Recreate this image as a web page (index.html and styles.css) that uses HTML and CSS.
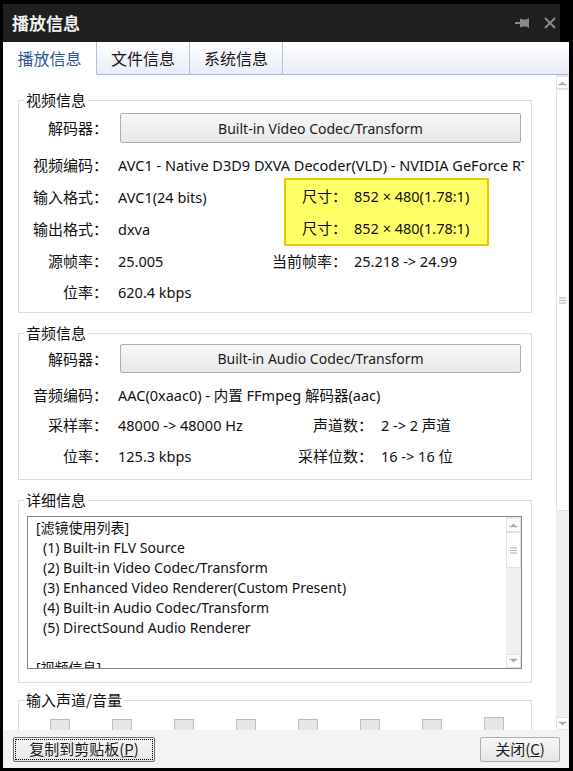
FILE: index.html
```html
<!DOCTYPE html>
<html lang="zh-CN">
<head>
<meta charset="utf-8">
<title>播放信息</title>
<link rel="stylesheet" href="styles.css">
</head>
<body>
<div class="window">
  <header class="titlebar">
    <span class="title">播放信息</span>
    <div class="title-icons">
      <svg class="pin" width="15" height="12" viewBox="0 0 15 12">
        <rect x="0" y="5" width="6" height="2" fill="#8a8a8a"/>
        <path d="M5 1.5 L7.5 2.5 L11.5 2.5 L14 1 L14 11 L11.5 9.5 L7.5 9.5 L5 10.5 Z" fill="#8a8a8a"/>
      </svg>
      <svg class="close" width="12" height="12" viewBox="0 0 12 12">
        <path d="M1 1 L11 11 M11 1 L1 11" stroke="#8a8a8a" stroke-width="2"/>
      </svg>
    </div>
  </header>

  <nav class="tabs">
    <div class="tab active">播放信息</div>
    <div class="tab">文件信息</div>
    <div class="tab">系统信息</div>
    <div class="tab-rest"></div>
  </nav>

  <main class="main">
    <div class="content">
      <fieldset class="group g-video">
        <legend>视频信息</legend>
        <div class="decoder-row">
          <span class="lbl">解码器：</span>
          <button class="codec">Built-in Video Codec/Transform</button>
        </div>
        <div class="vgrid">
          <span class="lbl">视频编码：</span>
          <span class="val span3">AVC1 - Native D3D9 DXVA Decoder(VLD) - NVIDIA GeForce RTX 2060</span>

          <span class="lbl">输入格式：</span>
          <span class="val">AVC1(24 bits)</span>
          <div class="highlight">
            <span class="hlbl">尺寸：</span><span class="val">852 × 480(1.78:1)</span>
            <span class="hlbl">尺寸：</span><span class="val">852 × 480(1.78:1)</span>
          </div>

          <span class="lbl">输出格式：</span>
          <span class="val">dxva</span>

          <span class="lbl">源帧率：</span>
          <span class="val">25.005</span>
          <span class="lbl2">当前帧率：</span>
          <span class="val">25.218 -&gt; 24.99</span>

          <span class="lbl">位率：</span>
          <span class="val">620.4 kbps</span>
        </div>
      </fieldset>

      <fieldset class="group g-audio">
        <legend>音频信息</legend>
        <div class="decoder-row">
          <span class="lbl">解码器：</span>
          <button class="codec">Built-in Audio Codec/Transform</button>
        </div>
        <div class="agrid">
          <span class="lbl">音频编码：</span>
          <span class="val span3">AAC(0xaac0) - 内置 FFmpeg 解码器(aac)</span>

          <span class="lbl">采样率：</span>
          <span class="val">48000 -&gt; 48000 Hz</span>
          <span class="lbl2">声道数：</span>
          <span class="val">2 -&gt; 2 声道</span>

          <span class="lbl">位率：</span>
          <span class="val">125.3 kbps</span>
          <span class="lbl2">采样位数：</span>
          <span class="val">16 -&gt; 16 位</span>
        </div>
      </fieldset>

      <fieldset class="group g-detail">
        <legend>详细信息</legend>
        <div class="listbox">
          <div class="list-lines">
            <div class="line">[滤镜使用列表]</div>
            <div class="line item">(1) Built-in FLV Source</div>
            <div class="line item">(2) Built-in Video Codec/Transform</div>
            <div class="line item">(3) Enhanced Video Renderer(Custom Present)</div>
            <div class="line item">(4) Built-in Audio Codec/Transform</div>
            <div class="line item">(5) DirectSound Audio Renderer</div>
            <div class="line">&nbsp;</div>
            <div class="line">[视频信息]</div>
          </div>
          <div class="mini-sb">
            <div class="msb-btn">
              <svg width="9" height="6" viewBox="0 0 9 6"><path d="M2 4 L4.5 1.5 L7 4 Z" fill="#a8a8a8"/><rect x="0.5" y="4" width="8" height="1.2" fill="#a8a8a8"/></svg>
            </div>
            <div class="msb-thumb">
              <svg width="9" height="7" viewBox="0 0 9 7"><rect x="1" y="0.5" width="7" height="1" fill="#b0b0b0"/><rect x="1" y="3" width="7" height="1" fill="#b0b0b0"/><rect x="1" y="5.5" width="7" height="1" fill="#b0b0b0"/></svg>
            </div>
            <div class="msb-track"></div>
            <div class="msb-btn">
              <svg width="9" height="6" viewBox="0 0 9 6"><rect x="0.5" y="0.8" width="8" height="1.2" fill="#a8a8a8"/><path d="M2 2 L4.5 4.5 L7 2 Z" fill="#a8a8a8"/></svg>
            </div>
          </div>
        </div>
      </fieldset>

      <fieldset class="group g-input">
        <legend>输入声道/音量</legend>
        <div class="meters">
          <span class="meter"></span>
          <span class="meter"></span>
          <span class="meter"></span>
          <span class="meter"></span>
          <span class="meter"></span>
          <span class="meter"></span>
          <span class="meter"></span>
          <span class="meter tall"></span>
        </div>
      </fieldset>
    </div>

    <div class="vscroll">
      <div class="sb-btn">
        <svg width="9" height="6" viewBox="0 0 9 6"><path d="M2 4 L4.5 1.5 L7 4 Z" fill="#a8a8a8"/><rect x="0.5" y="4" width="8" height="1.2" fill="#a8a8a8"/></svg>
      </div>
      <div class="sb-thumb">
        <svg width="9" height="7" viewBox="0 0 9 7"><rect x="1" y="0.5" width="7" height="1" fill="#b0b0b0"/><rect x="1" y="3" width="7" height="1" fill="#b0b0b0"/><rect x="1" y="5.5" width="7" height="1" fill="#b0b0b0"/></svg>
      </div>
      <div class="sb-track"></div>
      <div class="sb-btn">
        <svg width="9" height="6" viewBox="0 0 9 6"><rect x="0.5" y="0.8" width="8" height="1.2" fill="#a8a8a8"/><path d="M2 2 L4.5 4.5 L7 2 Z" fill="#a8a8a8"/></svg>
      </div>
    </div>
  </main>

  <footer class="footer">
    <button class="fbtn copy">复制到剪贴板(<u>P</u>)</button>
    <button class="fbtn close-btn">关闭(<u>C</u>)</button>
  </footer>
</div>
</body>
</html>
```

FILE: styles.css
```css
* { box-sizing: border-box; }

html, body {
  margin: 0;
  padding: 0;
}

body {
  background: #000;
  font-family: "Noto Sans", "Noto Sans CJK SC", sans-serif;
  font-size: 14px;
  line-height: 20px;
  color: #111;
}

.window {
  width: 573px;
  height: 771px;
  padding: 4px 4px 3px 3px;
  display: flex;
  flex-direction: column;
  background: #000;
  overflow: hidden;
}

/* title bar */
.titlebar {
  height: 38px;
  flex: none;
  margin-right: 9px;
  background: #1f1f1f;
  display: flex;
  align-items: center;
  justify-content: space-between;
  padding: 0 4px 0 9px;
}

.title {
  color: #f0f0f0;
  font-family: "Noto Sans CJK SC", sans-serif;
  font-size: 17px;
  font-weight: 700;
}

.title-icons {
  display: flex;
  align-items: center;
  gap: 14px;
}

.title-icons svg { display: block; }

/* tabs */
.tabs {
  height: 33px;
  flex: none;
  display: flex;
  background: linear-gradient(#ffffff, #e8ebf8);
}

.tab {
  width: 93px;
  display: flex;
  align-items: center;
  justify-content: center;
  font-family: "Noto Sans CJK SC", sans-serif;
  font-size: 16px;
  color: #1a1a1a;
  border-right: 1px solid #b7bedf;
  border-bottom: 1px solid #a9b1d8;
}

.tab.active {
  width: 94px;
  background: #fff;
  border-bottom-color: #fff;
  color: #2f5597;
}

.tab-rest {
  flex: 1;
  border-bottom: 1px solid #a9b1d8;
}

/* main */
.main {
  flex: 1;
  min-height: 0;
  display: flex;
}

.content {
  flex: 1;
  min-width: 0;
  overflow: hidden;
  background: #fff;
  padding: 15px 0 0 15px;
}

.vscroll {
  width: 13px;
  flex: none;
  display: flex;
  flex-direction: column;
  background: #f0f0f0;
  padding-top: 1px;
}

.sb-btn, .msb-btn {
  flex: none;
  display: flex;
  align-items: center;
  justify-content: center;
  background: #fff;
  border: 1px solid #e2e2e2;
}

.sb-btn { height: 13px; }

.sb-thumb, .msb-thumb {
  flex: none;
  display: flex;
  align-items: center;
  justify-content: center;
  background: #fff;
  border: 1px solid #e2e2e2;
}

.sb-thumb { height: 422px; }

.sb-track, .msb-track { flex: 1; }

.vscroll svg, .mini-sb svg { display: block; }

/* group boxes */
.group {
  margin: 0;
  padding: 0;
  width: 514px;
  min-width: 0;
  border: 1px solid #dcdcdc;
}

.group legend {
  margin-left: 5px;
  padding: 0 2px;
  font-family: "Noto Sans CJK SC", sans-serif;
  font-size: 15px;
  line-height: 20px;
  color: #111;
}

.lbl, .lbl2, .hlbl {
  font-family: "Noto Sans CJK SC", sans-serif;
  font-size: 15px;
  text-align: right;
  white-space: nowrap;
  color: #111;
}

.val {
  white-space: nowrap;
  font-size: 14.5px;
  color: #111;
}

.decoder-row {
  display: flex;
  align-items: center;
}

.decoder-row .lbl {
  width: 89px;
  flex: none;
}

.codec {
  margin: 0 0 0 12px;
  width: 401px;
  padding: 0;
  font-family: "Noto Sans", "Noto Sans CJK SC", sans-serif;
  font-size: 14px;
  color: #1c1c1c;
  background: linear-gradient(#f7f7f7, #e8e8e8);
  border: 1px solid #adadad;
  border-radius: 2px;
}

/* video */
.g-video .decoder-row { margin-top: 3px; height: 30px; }
.g-video .codec { height: 30px; }

.vgrid {
  margin-top: 6px;
  padding-bottom: 5px;
  display: grid;
  grid-template-columns: 99px 148px 88px 170px;
  grid-template-rows: 32px 32px 32px 32px 30px;
  align-items: center;
}

.vgrid .lbl { grid-column: 1; padding-right: 10px; }
.vgrid .lbl2 { grid-column: 3; padding-right: 7px; }
.span3 { grid-column: 2 / 5; overflow: hidden; }

.highlight {
  grid-column: 3 / 5;
  grid-row: 2 / 4;
  align-self: start;
  justify-self: start;
  margin: -3px 0 0 18px;
  width: 205px;
  height: 68px;
  background: #ffff66;
  border: 2px solid #f3c300;
  display: grid;
  grid-template-columns: 61px 1fr;
  grid-template-rows: 32px 32px;
  align-items: center;
}

.highlight .val { padding-left: 7px; }

/* audio */
.g-audio { margin-top: 10px; }
.g-audio .decoder-row { margin-top: 1px; height: 29px; }
.g-audio .codec { height: 29px; }

.agrid {
  margin-top: 6px;
  padding-bottom: 7px;
  display: grid;
  grid-template-columns: 99px 172px 91px 143px;
  grid-template-rows: 31px 29px 33px;
  align-items: center;
}

.agrid .lbl { grid-column: 1; padding-right: 10px; }
.agrid .lbl2 { grid-column: 3; padding-right: 8px; }

/* details */
.g-detail { margin-top: 10px; padding-bottom: 13px; }

.listbox {
  margin: 6px 0 0 8px;
  width: 495px;
  height: 153px;
  border: 1px solid #848484;
  display: flex;
  overflow: hidden;
}

.list-lines {
  flex: 1;
  min-width: 0;
  padding: 1px 0 0 8px;
  overflow: hidden;
}

.line {
  height: 20px;
  white-space: nowrap;
  color: #111;
}

.line.item { padding-left: 7px; }

.mini-sb {
  width: 15px;
  flex: none;
  display: flex;
  flex-direction: column;
  background: #f0f0f0;
  padding: 1px 0 0 0;
}

.msb-btn { height: 14px; }
.msb-thumb { height: 36px; }

/* input channels */
.g-input { margin-top: 7px; height: 80px; }

.meters {
  margin: 9px 0 0 31px;
  display: flex;
  gap: 42px;
  align-items: flex-start;
}

.meter {
  width: 20px;
  height: 60px;
  background: #e6e6e6;
  border: 1px solid #bdbdbd;
}

.meter.tall { margin-top: -2px; }

/* footer */
.footer {
  height: 38px;
  flex: none;
  background: #f3f3f3;
  display: flex;
  align-items: center;
  justify-content: space-between;
  padding: 0 9px 0 10px;
}

.fbtn {
  height: 25px;
  margin: 0;
  padding: 0;
  font-family: "Noto Sans CJK SC", sans-serif;
  font-size: 15px;
  line-height: 20px;
  color: #1a1a1a;
  background: linear-gradient(#f7f7f7, #e6e6e6);
  border: 1px solid #adadad;
  border-radius: 2px;
}

.fbtn.copy {
  width: 142px;
  border-color: #707070;
  outline: 1px dotted #000;
  outline-offset: -3px;
}

.fbtn.close-btn { width: 80px; }
```
